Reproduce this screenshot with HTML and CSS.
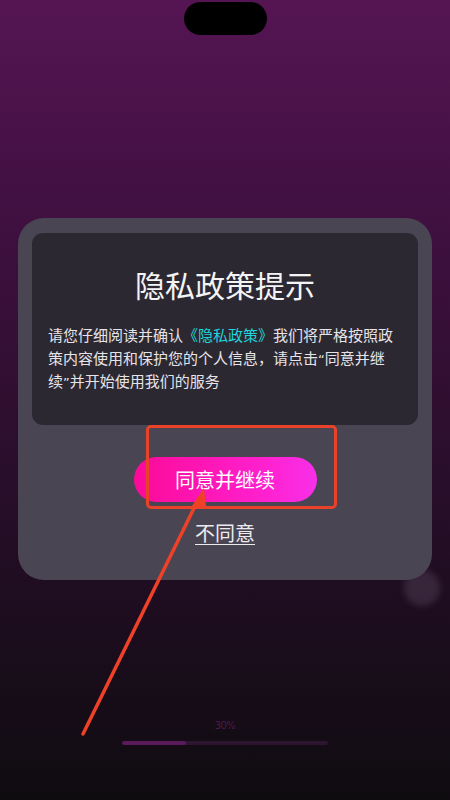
FILE: index.html
```html
<!DOCTYPE html>
<html lang="zh-CN">
<head>
<meta charset="utf-8">
<title>隐私政策提示</title>
<link rel="stylesheet" href="styles.css">
</head>
<body>
<div class="screen">
  <div class="notch"></div>
  <div class="modal">
    <div class="card">
      <h1 class="title">隐私政策提示</h1>
      <p class="desc">请您仔细阅读并确认<span class="link">《隐私政策》</span>我们将严格按照政策内容使用和保护您的个人信息，请点击<span class="q">“</span>同意并继续<span class="q">”</span>并开始使用我们的服务</p>
    </div>
    <button class="agree">同意并继续</button>
    <a class="disagree">不同意</a>
  </div>
  <div class="progress">
    <div class="pct">30%</div>
    <div class="track"><div class="fill" style="width:31%"></div></div>
  </div>
  <div class="orb"></div>
  <div class="mark-box"></div>
  <svg class="mark-arrow" width="450" height="800" viewBox="0 0 450 800">
    <line x1="83" y1="734" x2="199" y2="498" stroke="#ee4127" stroke-width="3.5" stroke-linecap="round"/>
    <polygon points="204,488 192,506 206,506" fill="#ee4127"/>
  </svg>
</div>
</body>
</html>
```

FILE: styles.css
```css
html, body {
  margin: 0;
  padding: 0;
}
body {
  width: 450px;
  height: 800px;
  overflow: hidden;
  font-family: "Noto Sans CJK SC", "Noto Sans", sans-serif;
}
.screen {
  position: relative;
  width: 450px;
  height: 800px;
  display: flex;
  flex-direction: column;
  align-items: center;
  background: linear-gradient(180deg, #551553 0%, #3f1040 28%, #200d22 72%, #0f0c10 100%);
}
.notch {
  width: 83px;
  height: 33px;
  margin-top: 2px;
  border-radius: 17px;
  background: #000;
}
.modal {
  margin-top: 183px;
  width: 414px;
  box-sizing: border-box;
  padding: 15px 14px 33px;
  background: #4a4552;
  border-radius: 26px;
  display: flex;
  flex-direction: column;
  align-items: center;
}
.card {
  width: 100%;
  box-sizing: border-box;
  background: #2c2832;
  border-radius: 11px;
  padding: 30px 16px 33px;
}
.title {
  margin: 0;
  font-size: 30px;
  line-height: 42px;
  font-weight: 400;
  color: #f4f4f4;
  text-align: center;
}
.desc {
  margin: 18px 0 0;
  font-size: 15px;
  line-height: 23px;
  color: #e6e4e8;
}
.link {
  color: #1ed4dd;
}
.q {
  font-family: "DejaVu Sans", sans-serif;
  font-size: 13px;
  line-height: 1;
}
.agree {
  margin-top: 32px;
  width: 183px;
  height: 45px;
  border: none;
  border-radius: 23px;
  background: linear-gradient(90deg, #fb0a98 0%, #ff22d2 75%, #f730e8 100%);
  color: #fff;
  font-family: inherit;
  font-size: 20px;
  line-height: 28px;
  padding: 0;
}
.disagree {
  margin-top: 17px;
  font-size: 20px;
  line-height: 28px;
  color: #eceaee;
  text-decoration: underline;
  text-underline-offset: 3px;
  text-decoration-thickness: 1px;
}
.progress {
  margin-top: 139px;
  display: flex;
  flex-direction: column;
  align-items: center;
}
.pct {
  font-family: "DejaVu Sans", sans-serif;
  font-size: 10px;
  line-height: 14px;
  color: #4c1a4e;
  letter-spacing: -0.5px;
}
.track {
  margin-top: 8px;
  width: 206px;
  height: 4px;
  border-radius: 2px;
  background: #2d1430;
  overflow: hidden;
}
.fill {
  height: 100%;
  background: #5a1a5c;
  border-radius: 2px;
}
.orb {
  position: absolute;
  left: 404px;
  top: 570px;
  width: 36px;
  height: 36px;
  border-radius: 50%;
  background: rgba(120, 100, 125, 0.28);
  filter: blur(3px);
  z-index: 0;
}
.modal, .progress, .notch {
  position: relative;
  z-index: 1;
}
.mark-box {
  position: absolute;
  left: 146px;
  top: 425px;
  width: 191px;
  height: 84px;
  box-sizing: border-box;
  border: 3px solid #ea4228;
  border-radius: 5px;
  z-index: 2;
}
.mark-arrow {
  position: absolute;
  left: 0;
  top: 0;
  z-index: 3;
  pointer-events: none;
}
```
